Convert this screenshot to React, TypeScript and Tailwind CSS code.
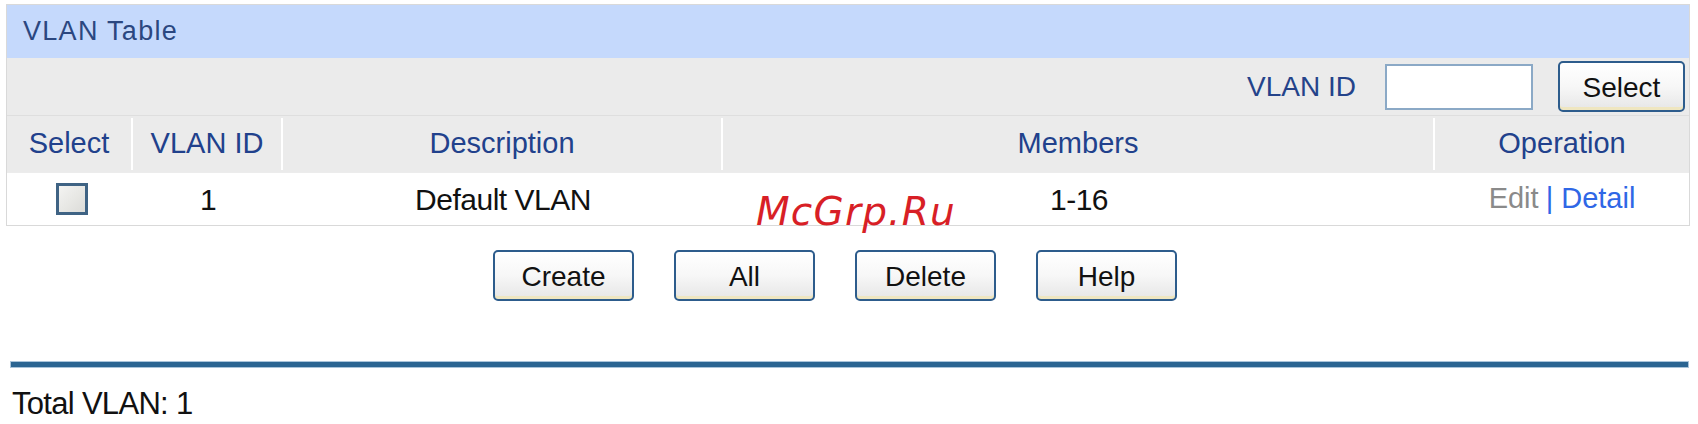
import React from "react";

const sans = "font-['Liberation_Sans',Arial,sans-serif]";

function Btn({ label, className }: { label: string; className: string }) {
  return (
    <button
      className={`${className} flex items-center justify-center pt-[3px] rounded-[5px] border-2 border-[#2d5c8c] bg-gradient-to-b from-white via-[#f7f7f7] to-[#e6e6e6] text-[28px] text-[#111] shadow-[inset_0_-3px_0_#efe6c0] ${sans}`}
    >
      {label}
    </button>
  );
}

export default function App() {
  const cols = "grid grid-cols-[126px_150px_440px_712px_254px]";

  return (
    <div className={`relative w-[1698px] h-[424px] overflow-hidden bg-white pt-[4px] ${sans}`}>
      {/* table */}
      <div className="ml-[6px] w-[1684px] border border-[#d9d9d9]">
        <div className="h-[53px] bg-[#c5d9fc] pl-[16px] flex items-center text-[27px] tracking-[1.3px] text-[#2b4780]">
          VLAN Table
        </div>

        <div className="h-[57px] bg-[#ebebeb] flex items-center justify-end pr-[4px]">
          <span className="text-[28px] text-[#24438a] mr-[29px]">VLAN ID</span>
          <input className="w-[148px] h-[46px] border-2 border-[#8ba9c6] bg-white outline-none" />
          <Btn label="Select" className="ml-[25px] w-[127px] h-[51px]" />
        </div>

        <div className={`${cols} h-[57px] bg-[#ebebeb] border-t border-[#dedede] text-[29px] text-[#21418c]`}>
          <div className="flex items-center justify-center border-r-2 border-white my-[2px]">Select</div>
          <div className="flex items-center justify-center border-r-2 border-white my-[2px]">VLAN ID</div>
          <div className="flex items-center justify-center border-r-2 border-white my-[2px]">Description</div>
          <div className="flex items-center justify-center border-r-2 border-white my-[2px]">Members</div>
          <div className="flex items-center justify-center">Operation</div>
        </div>

        <div className={`${cols} h-[53px] bg-white border-t border-[#ececec] text-[30px] tracking-[-0.5px] text-[#111]`}>
          <div className="flex items-center justify-center pl-[3px]">
            <span className="w-[32px] h-[32px] border-[3px] border-[#3f6384] bg-gradient-to-br from-[#f4f4f2] to-[#dcdcd8]" />
          </div>
          <div className="flex items-center justify-center">1</div>
          <div className="flex items-center justify-center">Default VLAN</div>
          <div className="flex items-center justify-center">1-16</div>
          <div className="flex items-center justify-center text-[29px] tracking-normal">
            <span className="text-[#8a8a8a]">Edit</span>
            <span className="text-[#2f67e6] ml-[7px]">| Detail</span>
          </div>
        </div>
      </div>

      {/* action buttons */}
      <div className="mt-[24px] ml-[493px] flex gap-[40px]">
        <Btn label="Create" className="w-[141px] h-[51px]" />
        <Btn label="All" className="w-[141px] h-[51px]" />
        <Btn label="Delete" className="w-[141px] h-[51px]" />
        <Btn label="Help" className="w-[141px] h-[51px]" />
      </div>

      <div className="mt-[61px] ml-[11px] w-[1677px] h-[5px] bg-[#2b6592] shadow-[0_0_0_1px_#a9c4da]" />

      <div className="mt-[21px] ml-[12px] text-[31px] leading-[31px] tracking-[-0.7px] text-[#111]">
        Total VLAN: 1
      </div>

      {/* watermark */}
      <div className="absolute left-[756px] top-[192px] text-[39px] leading-[39px] italic tracking-[1.2px] text-[#d81f26] font-['DejaVu_Sans',sans-serif]">
        McGrp.Ru
      </div>
    </div>
  );
}
